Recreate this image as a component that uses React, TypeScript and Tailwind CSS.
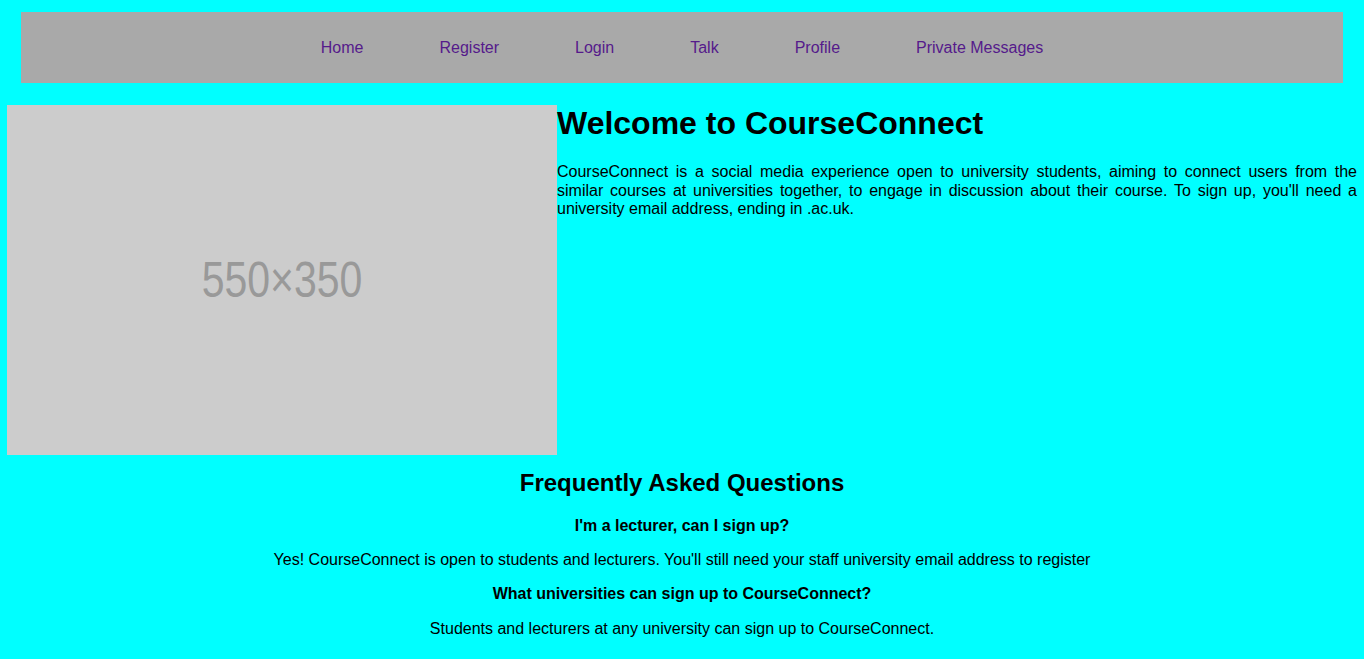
import React from 'react';

const links = ['Home', 'Register', 'Login', 'Talk', 'Profile', 'Private Messages'];

const faqs = [
  {
    q: "I'm a lecturer, can I sign up?",
    a: "Yes! CourseConnect is open to students and lecturers. You'll still need your staff university email address to register",
  },
  {
    q: 'What universities can sign up to CourseConnect?',
    a: 'Students and lecturers at any university can sign up to CourseConnect.',
  },
];

const App: React.FC = () => {
  return (
    <div className="min-h-screen bg-[#00ffff] pt-[12px] text-black font-['Liberation_Sans',Arial,sans-serif]">
      {/* top nav */}
      <nav className="mx-[21px] h-[71px] bg-[#a9a9a9] flex items-center justify-center gap-[76px]">
        {links.map((l) => (
          <a key={l} href="#" className="text-base text-[#551a8b] leading-[18px]">
            {l}
          </a>
        ))}
      </nav>

      {/* intro */}
      <div className="mt-[22px] flex px-[7px]">
        <div className="w-[550px] h-[350px] shrink-0 bg-[#cccccc] flex items-center justify-center overflow-hidden">
          <span className="text-[50px] leading-none text-[#999999] scale-x-[0.82] inline-block">550×350</span>
        </div>
        <div className="flex-1">
          <h1 className="text-[32px] font-bold leading-[36.8px]">Welcome to CourseConnect</h1>
          <p className="mt-[21.44px] text-base leading-[18.4px] text-justify">
            CourseConnect is a social media experience open to university students, aiming to connect users from the
            similar courses at universities together, to engage in discussion about their course. To sign up, you'll
            need a university email address, ending in .ac.uk.
          </p>
        </div>
      </div>

      {/* faq */}
      <div className="mt-[14px] text-center pb-[16px]">
        <h2 className="text-2xl font-bold leading-[27.6px] mb-[20px]">Frequently Asked Questions</h2>
        <div className="flex flex-col gap-[16px]">
          {faqs.map((f) => (
            <React.Fragment key={f.q}>
              <p className="text-base font-bold leading-[18.4px]">{f.q}</p>
              <p className="text-base leading-[18.4px]">{f.a}</p>
            </React.Fragment>
          ))}
        </div>
      </div>
    </div>
  );
};

export default App;
